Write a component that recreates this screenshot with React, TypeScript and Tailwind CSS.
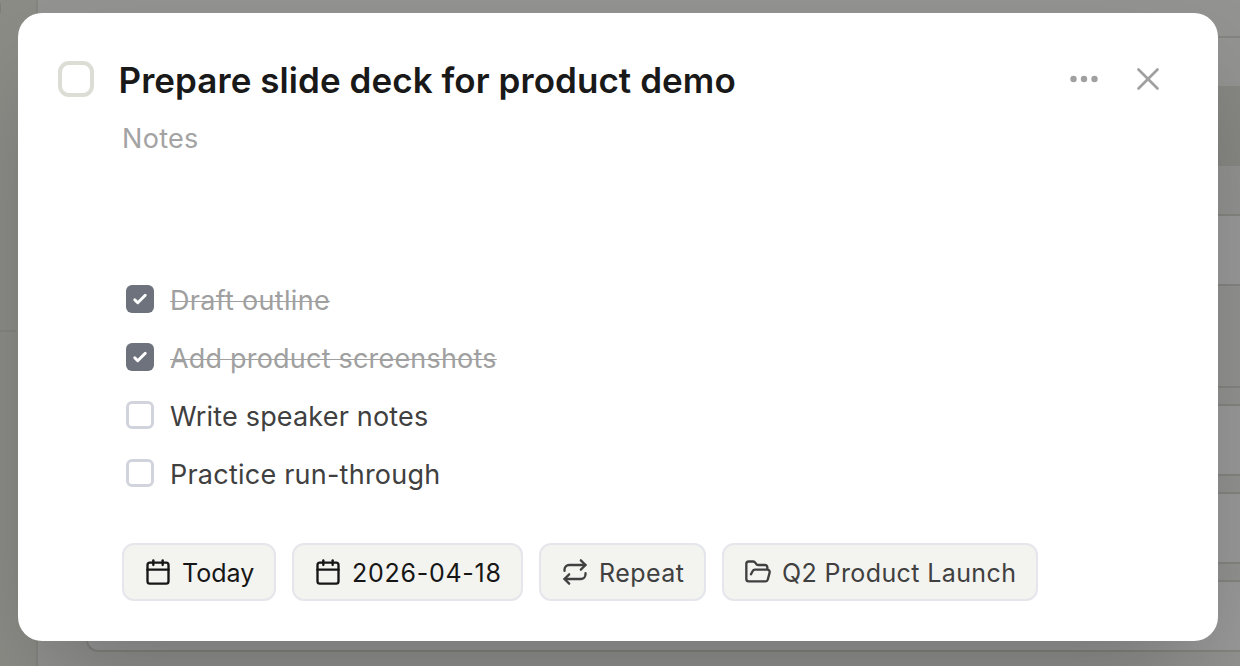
import type { ReactNode } from "react";
import { Calendar, FolderOpen, Repeat, X } from "lucide-react";

const subtasks = [
  { label: "Draft outline", done: true, tracking: "tracking-[0.3px]" },
  { label: "Add product screenshots", done: true, tracking: "tracking-[0.2px]" },
  { label: "Write speaker notes", done: false, tracking: "tracking-[0.17px]" },
  { label: "Practice run-through", done: false, tracking: "tracking-[0.23px]" },
];

function Chip({
  icon,
  label,
  className,
}: {
  icon: ReactNode;
  label: string;
  className: string;
}) {
  return (
    <button
      className={`flex h-[58px] shrink-0 items-center gap-[10px] whitespace-nowrap rounded-xl border-2 border-[#e5e6eb] bg-[#f3f3ef] pl-5 text-[25px] ${className}`}
    >
      {icon}
      <span className="pt-[3px]">{label}</span>
    </button>
  );
}

function Backdrop() {
  return (
    <div className="flex h-full w-full bg-[#f4f4f0]">
      {/* Sidebar */}
      <div className="h-full w-[38px] shrink-0 border-r-2 border-[#dcddd5] bg-[#e9eae2]">
        <div className="h-[3px]" />
        <div className="h-[10px] w-px rounded-r-sm bg-[#d3d4cc]" />
        <div className="h-[319px] w-4 border-b-2 border-[#dcddd5]" />
      </div>

      {/* Page content */}
      <div className="flex min-w-0 flex-1 flex-col">
        <div className="h-[38px] shrink-0 border-b-2 border-[#dcddd5] bg-[#f5f5f2]" />
        <div className="h-12 shrink-0 bg-[#f5f5f2]" />
        <div className="h-20 shrink-0 bg-[#e2e2dc]" />
        <div className="flex flex-col pl-12 pt-12">
          <div className="h-[72px] border-y-2 border-[#dcddd5] bg-white" />
          <div className="mb-4 h-[102px] border-b-2 border-[#dcddd5]" />
          <div className="flex flex-col gap-4">
            <div className="h-[72px] rounded-l-xl border-2 border-r-0 border-[#dcddd5] bg-white" />
            <div className="h-[72px] rounded-l-xl border-2 border-r-0 border-[#dcddd5] bg-white" />
            <div className="h-[72px] rounded-l-xl border-2 border-r-0 border-[#dcddd5] bg-white" />
          </div>
        </div>
      </div>
    </div>
  );
}

export default function App() {
  return (
    <div className="relative h-[666px] w-[1240px] overflow-hidden font-['Inter',sans-serif]">
      <Backdrop />

      <div className="absolute inset-0 bg-black/40 pl-[18px] pt-[13px]">
        <div className="flex h-[628px] w-[1200px] flex-col rounded-3xl bg-white px-10 pt-10 shadow-[0_50px_100px_-24px_rgba(0,0,0,0.25)]">
          {/* Title row */}
          <div className="flex h-[54px] items-center">
            <div className="mt-[-2px] size-9 shrink-0 rounded-[11px] border-4 border-[#dcded5]" />
            <h1 className="ml-[24.5px] flex-1 text-[35px] font-semibold leading-[54px] tracking-[0.06px] text-[#191919]">
              Prepare slide deck for product demo
            </h1>
            <div className="mr-[11px] flex items-center gap-[31px] text-[#a0a0a0]">
              <svg className="h-7 w-7" viewBox="0 0 28 28" fill="currentColor">
                <circle cx="3.5" cy="13" r="3.2" />
                <circle cx="14" cy="13" r="3.2" />
                <circle cx="24.5" cy="13" r="3.2" />
              </svg>
              <X className="mt-[-2px] size-[38px]" strokeWidth={1.7} />
            </div>
          </div>

          {/* Notes */}
          <div className="ml-16 mt-3 h-[152px] pt-px text-[27px] leading-[38px] tracking-[0.3px] text-[#a3a3a3]">
            Notes
          </div>

          {/* Subtasks */}
          <ul className="ml-[68px] flex flex-col">
            {subtasks.map((task) => (
              <li key={task.label} className="flex h-[58px] items-center">
                {task.done ? (
                  <span className="mt-[-2px] flex size-7 items-center justify-center rounded-md bg-[#6d727d]">
                    <svg className="size-6" viewBox="0 0 16 16" fill="white">
                      <path d="M12.207 4.793a1 1 0 010 1.414l-5 5a1 1 0 01-1.414 0l-2-2a1 1 0 011.414-1.414L6.5 9.086l4.293-4.293a1 1 0 011.414 0z" />
                    </svg>
                  </span>
                ) : (
                  <span className="mt-[-2px] size-7 rounded-md border-3 border-[#d1d4dc]" />
                )}
                <span
                  className={`ml-4 pt-[3px] text-[27px] ${task.tracking} ${
                    task.done ? "text-[#a0a0a0] line-through decoration-1" : "text-[#404040]"
                  }`}
                >
                  {task.label}
                </span>
              </li>
            ))}
          </ul>

          {/* Properties */}
          <div className="ml-16 mt-10 flex gap-4">
            <Chip
              className="w-[154px] tracking-[0.03px] text-[#161616]"
              icon={<Calendar className="size-7 shrink-0" strokeWidth={2} />}
              label="Today"
            />
            <Chip
              className="w-[231px] tracking-[0.73px] text-[#161616]"
              icon={<Calendar className="size-7 shrink-0" strokeWidth={2} />}
              label="2026-04-18"
            />
            <Chip
              className="w-[167px] tracking-[0.44px] text-[#404040]"
              icon={<Repeat className="size-7 shrink-0" strokeWidth={2} />}
              label="Repeat"
            />
            <Chip
              className="w-[316px] tracking-[0.39px] text-[#404040]"
              icon={<FolderOpen className="size-7 shrink-0" strokeWidth={2} />}
              label="Q2 Product Launch"
            />
          </div>
        </div>
      </div>
    </div>
  );
}
